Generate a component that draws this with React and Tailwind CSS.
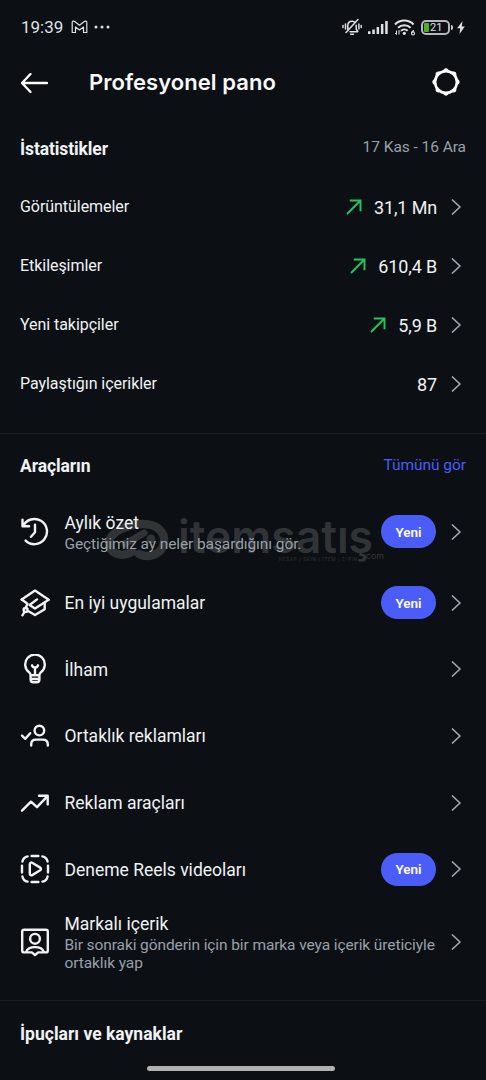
const stats = [
  { label: 'Görüntülemeler', value: '31,1 Mn', up: true },
  { label: 'Etkileşimler', value: '610,4 B', up: true },
  { label: 'Yeni takipçiler', value: '5,9 B', up: true },
  { label: 'Paylaştığın içerikler', value: '87', up: false },
];

const tools = [
  { icon: HistoryIcon, title: 'Aylık özet', desc: 'Geçtiğimiz ay neler başardığını gör.', isNew: true, height: 'h-[75px]' },
  { icon: CapIcon, title: 'En iyi uygulamalar', isNew: true, height: 'h-[67px]' },
  { icon: BulbIcon, title: 'İlham', height: 'h-[66px]' },
  { icon: PartnerIcon, title: 'Ortaklık reklamları', height: 'h-[67px]' },
  { icon: TrendIcon, title: 'Reklam araçları', height: 'h-[67px]' },
  { icon: ReelsIcon, title: 'Deneme Reels videoları', isNew: true, height: 'h-[66px]' },
  {
    icon: BrandedIcon,
    title: 'Markalı içerik',
    desc: 'Bir sonraki gönderin için bir marka veya içerik üreticiyle ortaklık yap',
    height: 'h-[79px]',
  },
];

function Icon({ children }) {
  return (
    <svg
      viewBox="0 0 30 30"
      className="h-[30px] w-[30px] shrink-0"
      fill="none"
      stroke="currentColor"
      strokeWidth="2.4"
      strokeLinecap="round"
      strokeLinejoin="round"
    >
      {children}
    </svg>
  );
}

function HistoryIcon() {
  return (
    <Icon>
      <path d="M2.500 2.800v6.400h6.600M3 9.200A12.600 12.600 0 1 1 5.600 23.600M15 7.600v7.600l-4 4.600" />
    </Icon>
  );
}

function CapIcon() {
  return (
    <Icon>
      <path d="M1.700 11.500 15 2.600l13.700 9.200L15 20.600 9.600 17l7.400-5.600" />
      <path d="m1.700 11.500 5.800 4.200-1.900 4.300M24.700 14.800v6.400L15 27l-6-3.500" />
      <circle cx="5.600" cy="22" r="2" />
      <path d="m4.400 24-2 3.300" />
    </Icon>
  );
}

function BulbIcon() {
  return (
    <Icon>
      <path d="M10.600 21.200c0-1.500-.6-2-1.500-3a9.800 9.800 0 1 1 11.800 0c-.9 1-1.500 1.500-1.500 3zM10.600 21.200v4.400c0 1.700 1 2.700 2.700 2.700h3.400c1.700 0 2.700-1 2.700-2.700v-4.400M11 25h8M15 13.500V20" />
      <path d="M12 11.300c.4 1.600 1.400 2.300 3 2.300s2.600-.7 3-2.300" />
    </Icon>
  );
}

function PartnerIcon() {
  return (
    <Icon>
      <circle cx="19.400" cy="9.600" r="4.800" />
      <path d="M11.200 24.500v-1.200c0-3 2-4.700 4.600-4.700h7c3 0 5 1.800 5 4.700v1.200M2 14.600l3.300 3.200 4.900-5.600" />
    </Icon>
  );
}

function TrendIcon() {
  return (
    <Icon>
      <path d="m2 22.700 9-9 6 5.500L27.500 8.200M19 7.700h8.700v8.700" />
    </Icon>
  );
}

function ReelsIcon() {
  return (
    <Icon>
      <path d="M11.600 2h6.800M11.600 28h6.800M2 11.600v6.800M28 11.600v6.800M2.400 7.600c.6-2.800 2.400-4.700 5.200-5.200M22.400 2.400c2.800.5 4.600 2.400 5.200 5.200M27.600 22.400c-.6 2.800-2.400 4.700-5.200 5.200M7.600 27.600c-2.800-.5-4.600-2.400-5.200-5.200" />
      <path d="M9.800 10.200c0-1.400 1.300-2 2.400-1.400l8 4.800c1 .6 1 2 0 2.700l-8 4.800c-1.100.6-2.400 0-2.400-1.300z" />
    </Icon>
  );
}

function BrandedIcon() {
  return (
    <Icon>
      <path d="M4.200 2.700h21.600c1.200 0 2 .8 2 2v18.700c0 1.200-.8 2-2 2h-7.600L15 28l-3.200-2.600H4.200c-1.200 0-2-.8-2-2V4.700c0-1.200.8-2 2-2z" />
      <circle cx="15" cy="11.800" r="4.900" />
      <path d="M6.200 24.800c1.200-3.300 4.400-4.700 8.800-4.700s7.600 1.400 8.800 4.700" />
    </Icon>
  );
}

function SettingsIcon() {
  const bumps = [0, 45, 90, 135, 180, 225, 270, 315];
  return (
    <svg viewBox="0 0 30 30" className="h-[30px] w-[30px] text-white" fill="currentColor">
      <circle cx="15" cy="15" r="10.900" fill="none" stroke="currentColor" strokeWidth="2.600" />
      {bumps.map((angle) => (
        <path key={angle} d="M10.800 4.500C12.500 3.400 13 1.300 15 1.300s2.500 2.100 4.200 3.200z" transform={`rotate(${angle} 15 15)`} />
      ))}
    </svg>
  );
}

function StatusBar() {
  return (
    <div className="flex h-[54px] items-center justify-between px-[21px] text-[#dfe1e3]">
      <div className="flex items-center">
        <span className="w-[43px] text-[17px] leading-none">19:39</span>
        <svg viewBox="0 0 17 14" className="ml-[7px] h-[14px] w-[17px]" fill="none" stroke="currentColor" strokeWidth="1.200" strokeLinejoin="round">
          <path d="M1.200 12V2.500c0-1.400 1.500-1.800 2.500-1L8.500 5.200l4.800-3.700c1-.8 2.500-.4 2.500 1V12.500h-3.300V7L8.500 10 4.500 7v5.500H1.200z" />
        </svg>
        <svg viewBox="0 0 16 4" className="ml-[6px] h-1 w-4" fill="currentColor">
          <circle cx="2" cy="2" r="1.500" />
          <circle cx="8" cy="2" r="1.500" />
          <circle cx="14" cy="2" r="1.500" />
        </svg>
      </div>
      <div className="flex items-center">
        <svg viewBox="0 0 20 18" className="h-[18px] w-5" fill="none" stroke="currentColor" strokeWidth="1.500" strokeLinecap="round" strokeLinejoin="round">
          <path d="M5.800 11.500V7.800c0-2.900 1.700-4.600 4.200-4.600 1 0 1.900.3 2.600.8M14.200 7.300v3.700l1.600 2.700H8M8.700 16.200h2.800M16 1.500 4 14.500M3.500 6v5M1 7.500v2M16.900 6v5M19.200 7.500v2" />
        </svg>
        <svg viewBox="0 0 20 14" className="ml-[6px] h-[14px] w-5" fill="currentColor">
          <path d="M0 11.200h2.500V14H0zM4.300 9.500h2.500V14H4.300zM8.600 7h2.500v7H8.600zM12.900 4h2.500v10h-2.500zM17.200 1h2.500v13h-2.500z" />
        </svg>
        <svg viewBox="0 0 22 17" className="ml-[6px] h-[17px] w-[22px]" fill="none" stroke="currentColor" strokeWidth="2">
          <path d="M1 5.500a13 13 0 0 1 18.600 0M4 8.700a9 9 0 0 1 12.600 0M7 11.800a4.700 4.700 0 0 1 6.600 0" />
          <circle cx="10.300" cy="14.300" r="1.600" fill="currentColor" stroke="none" />
          <path d="M2.500 11.500v4M1 14l1.500 1.500M5 15.500v-4l1 1" strokeWidth="1" />
          <path d="M20 11.600c-1.600.4-2.400 1.500-2.400 2.900" strokeWidth="1.100" />
          <circle cx="19" cy="14.400" r="1.500" strokeWidth="1.100" />
        </svg>
        <div className="ml-[5px] flex h-[15px] w-[29px] items-center rounded-[5px] border-2 border-[#b5b7b9] px-px">
          <span className="h-[9px] w-[5px] rounded-[1px] bg-[#4fae20]" />
          <span className="ml-px text-[11px] leading-[13px]">21</span>
        </div>
        <span className="ml-px h-[5px] w-[2px] rounded-r-sm bg-[#c9cbcd]" />
        <svg viewBox="0 0 8 13" className="ml-[4px] h-[13px] w-2" fill="currentColor">
          <path d="M5.500 0 .2 7.200h3L2.500 13l5.300-7.500h-3z" />
        </svg>
      </div>
    </div>
  );
}

function Header() {
  return (
    <header className="flex h-[56px] items-center pl-5 pr-[25px]">
      <svg viewBox="0 0 28 20" className="mt-px h-5 w-7 text-white" fill="none" stroke="currentColor" strokeWidth="2.300" strokeLinecap="round" strokeLinejoin="round">
        <path d="M27 10H2M10.500 1 2 10l8.500 9" />
      </svg>
      <h1 className="ml-[41px] flex-1 font-[Inter] text-[22px] font-semibold tracking-[0.05px] text-[#f7f9fa]">
        Profesyonel pano
      </h1>
      <SettingsIcon />
    </header>
  );
}

function Chevron() {
  return (
    <svg viewBox="0 0 10 16" className="h-4 w-[10px] shrink-0 text-[#a1a8b0]" fill="none" stroke="currentColor" strokeWidth="1.700" strokeLinecap="round" strokeLinejoin="round">
      <path d="M1.500 1 9 8l-7.500 7" />
    </svg>
  );
}

function StatRow({ label, value, up }) {
  return (
    <div className="flex h-[59px] items-center pl-5 pr-[25px] pt-px">
      <span className="flex-1 text-[16px] tracking-[-0.05px]">{label}</span>
      {up && (
        <svg viewBox="0 0 16 16" className="mr-[12px] h-4 w-4 text-[#1fc763]" fill="none" stroke="currentColor" strokeWidth="1.900">
          <path d="M1 15 14.500 1.500M3.800 1.500h10.700v10.800" />
        </svg>
      )}
      <span className="mr-[14px] text-[18px] tracking-[-0.15px]">{value}</span>
      <Chevron />
    </div>
  );
}

function ToolRow({ icon: ToolIcon, title, desc, isNew, height }) {
  return (
    <div className={`relative flex items-center pl-[19.500px] pr-[25px] ${height}`}>
      <ToolIcon />
      <div className="ml-[15px] min-w-0 flex-1 pt-[2px]">
        <p className="text-[17.500px] leading-[23px]">{title}</p>
        {desc && <p className="-mr-2 text-[15.500px] leading-[18px] tracking-[-0.1px] text-[#98a0a9]">{desc}</p>}
      </div>
      {isNew && (
        <span className="mr-[15px] flex h-[33px] w-[55px] items-center justify-center rounded-full bg-[#4a5df9] pt-px text-[13.500px] font-semibold text-white">
          Yeni
        </span>
      )}
      <Chevron />
    </div>
  );
}

function Watermark() {
  return (
    <svg viewBox="0 0 290 60" className="pointer-events-none absolute left-[100px] top-[13px] h-[60px] w-[290px] text-[#313437]" fill="currentColor">
      <path
        d="M32 45C21 51 8 46 9 35c1-9 17-18 34-18 15 0 22 9 21 18-1 12-15 17-25 12"
        fill="none"
        stroke="currentColor"
        strokeWidth="8.500"
        strokeLinecap="round"
      />
      <path d="M44 26 25 37" stroke="currentColor" strokeWidth="7" strokeLinecap="round" />
      <circle cx="51" cy="32" r="4.500" />
      <text x="78" y="46" fontSize="45" fontWeight="600" fontFamily="Inter" textLength="195" lengthAdjust="spacingAndGlyphs">itemsatış</text>
      <text x="179" y="53.500" fontSize="4.500" fontFamily="Inter" textLength="78">HESAP / SKIN / ITEM / E-PIN</text>
      <text x="266" y="52" fontSize="9" fontFamily="Inter" textLength="18" lengthAdjust="spacingAndGlyphs">com</text>
    </svg>
  );
}

export default function App() {
  return (
    <div className="flex h-[1080px] w-[486px] flex-col overflow-hidden bg-[#0c1014] font-[Roboto,sans-serif] text-[#f0f2f4]">
      <StatusBar />
      <Header />

      <section className="h-[324px] border-b border-[#181c20]">
        <div className="flex h-[67px] items-center justify-between px-5 pt-[10px]">
          <h2 className="pt-[2px] text-[17.500px] font-bold tracking-[-0.1px]">İstatistikler</h2>
          <span className="mb-px text-[15.500px] tracking-[-0.05px] text-[#98a0a9]">17 Kas - 16 Ara</span>
        </div>
        {stats.map((s) => (
          <StatRow key={s.label} {...s} />
        ))}
      </section>

      <section className="h-[567px] border-b border-[#181c20]">
        <div className="flex h-[60px] items-center justify-between px-5 pt-1">
          <h2 className="text-[17.500px] font-bold tracking-[-0.1px]">Araçların</h2>
          <span className="text-[15.500px] tracking-[-0.05px] text-[#4a5df9]">Tümünü gör</span>
        </div>
        <div className="relative">
          <Watermark />
          {tools.map((t) => (
            <ToolRow key={t.title} {...t} />
          ))}
        </div>
      </section>

      <section className="flex flex-1 flex-col items-center">
        <h2 className="w-full flex-1 px-5 pt-5 text-[17.500px] font-bold">İpuçları ve kaynaklar</h2>
        <span className="mb-[9px] mr-[4px] h-[5px] w-[188px] rounded-full bg-[#afb1b2]" />
      </section>
    </div>
  );
}
